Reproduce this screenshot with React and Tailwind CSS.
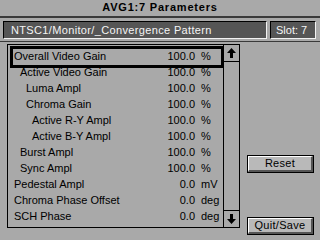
import React from "react";

const rows = [
  { label: "Overall Video Gain", level: 0, value: "100.0", unit: "%" },
  { label: "Active Video Gain", level: 1, value: "100.0", unit: "%" },
  { label: "Luma Ampl", level: 2, value: "100.0", unit: "%" },
  { label: "Chroma Gain", level: 2, value: "100.0", unit: "%" },
  { label: "Active R-Y Ampl", level: 3, value: "100.0", unit: "%" },
  { label: "Active B-Y Ampl", level: 3, value: "100.0", unit: "%" },
  { label: "Burst Ampl", level: 1, value: "100.0", unit: "%" },
  { label: "Sync Ampl", level: 1, value: "100.0", unit: "%" },
  { label: "Pedestal Ampl", level: 0, value: "0.0", unit: "mV" },
  { label: "Chroma Phase Offset", level: 0, value: "0.0", unit: "deg" },
  { label: "SCH Phase", level: 0, value: "0.0", unit: "deg" },
];

const indent = ["pl-[6px]", "pl-[12px]", "pl-[18px]", "pl-[24px]"];

function Arrow({ down }) {
  return (
    <svg width="9" height="10" viewBox="0 0 9 10" className={down ? "rotate-180" : ""}>
      <polygon points="4.5,0 9,5 6,5 6,10 3,10 3,5 0,5" fill="#000" />
    </svg>
  );
}

function Button({ children, className }) {
  return (
    <div className={"border border-black " + className}>
      <div className="h-full flex items-center justify-center bg-[#b9b9b9] border-t border-l border-t-white border-l-white border-r-2 border-b-2 border-r-[#555] border-b-[#555] text-[11px] tracking-[0.3px] text-black">
        {children}
      </div>
    </div>
  );
}

export default function App() {
  return (
    <div
      className="w-[320px] h-[240px] bg-[#a9a9a9] flex flex-col overflow-hidden text-black"
      style={{ fontFamily: '"Liberation Sans", Arial, sans-serif' }}
    >
      <div className="h-[16px] flex items-center justify-center font-bold text-[11px] tracking-[0.8px] leading-none pb-[1px]">
        AVG1:7 Parameters
      </div>
      <div className="h-[2px] bg-[#3a3a3a]" />
      <div className="h-[23px] flex items-start pt-[3px] pl-[3px]">
        <div className="w-[264px] h-[18px] bg-[#555555] border-t border-l border-black border-b border-r border-b-[#f2f2f2] border-r-[#f2f2f2] flex items-center pl-[7px] text-[11px] tracking-[0.35px] text-[#f4f4f4] leading-none">
          NTSC1/Monitor/_Convergence Pattern
        </div>
        <div className="ml-[3px] w-[46px] h-[18px] bg-[#555555] border-t border-l border-black border-b border-r border-b-[#f2f2f2] border-r-[#f2f2f2] flex items-center pl-[5px] text-[11px] text-[#f4f4f4] leading-none">
          Slot: 7
        </div>
      </div>
      <div className="h-[1px] bg-[#3a3a3a]" />
      <div className="flex mt-[2px]">
        <div className="ml-[7px] w-[233px] h-[184px] border border-black flex">
          <div className="relative w-[215px] pt-[3px]">
            <div className="absolute left-[2px] top-[1px] w-[214px] h-[22px] border-[3px] border-black" />
            {rows.map((r) => (
              <div key={r.label} className="h-[16px] flex items-center text-[11px] leading-[16px]">
                <div className={"flex-1 whitespace-nowrap " + indent[r.level]}>{r.label}</div>
                <div className="w-[40px] text-right">{r.value}</div>
                <div className="w-[22px] ml-[6px]">{r.unit}</div>
              </div>
            ))}
          </div>
          <div className="w-[16px] border-l border-black flex flex-col justify-between">
            <div className="h-[17px] border-b border-black flex items-center justify-center">
              <Arrow />
            </div>
            <div className="h-[17px] border-t border-black flex items-center justify-center">
              <Arrow down />
            </div>
          </div>
        </div>
        <div className="ml-[7px] w-[67px] flex flex-col">
          <Button className="mt-[111px] h-[18px]">Reset</Button>
          <Button className="mt-[44px] h-[18px]">Quit/Save</Button>
        </div>
      </div>
    </div>
  );
}
